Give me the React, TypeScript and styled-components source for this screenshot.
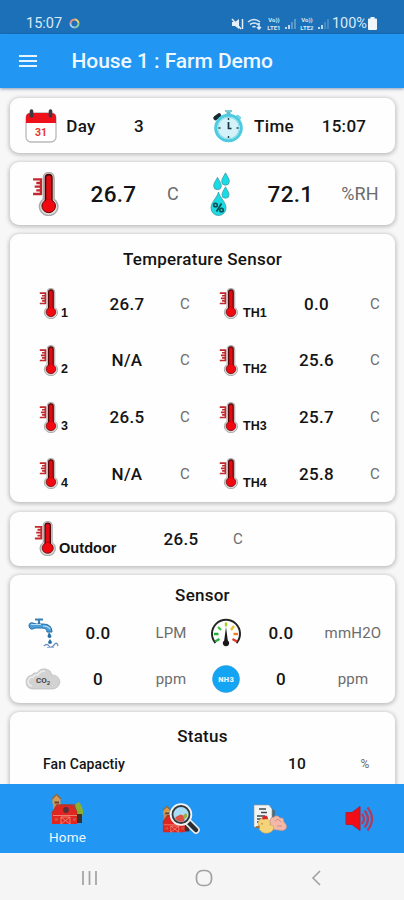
import React from "react";
import styled, { createGlobalStyle } from "styled-components";

const GlobalStyle = createGlobalStyle`
  * { box-sizing: border-box; }
  body { margin: 0; background: #f5f5f5; font-family: Roboto, "Liberation Sans", sans-serif; }
  svg { display: block; flex: none; }
`;

const Screen = styled.div`
  width: 404px;
  height: 900px;
  display: flex;
  flex-direction: column;
  overflow: hidden;
  background: #f7f7f7;
  color: #141414;
`;

const StatusBar = styled.header`
  flex: none;
  height: 34px;
  padding: 13px 27px 0 26px;
  display: flex;
  align-items: center;
  justify-content: space-between;
  background: #1b70b7;
  color: #d9e9f6;
  font-size: 14.5px;
`;

const StatusGroup = styled.div<{ $gap: number }>`
  display: flex;
  align-items: center;
  gap: ${(p) => p.$gap}px;
`;

const Network = styled.span`
  display: grid;
  width: 16px;
  font-size: 6px;
  font-weight: 700;
  line-height: 7.5px;
  text-align: center;
`;

const AppBar = styled.div`
  flex: none;
  height: 54px;
  padding-left: 19px;
  display: flex;
  align-items: center;
  gap: 34.5px;
  background: #2196f3;
  box-shadow: 0 1px 3px rgba(0, 40, 100, 0.45);
  z-index: 1;
`;

const AppTitle = styled.h1`
  margin: 0;
  color: #eef8ff;
  font-size: 21px;
  font-weight: 500;
  letter-spacing: -0.05px;
`;

const Content = styled.main`
  flex: 1;
  min-height: 0;
  overflow: hidden;
  padding: 10px 9px 0 10px;
  display: flex;
  flex-direction: column;
  gap: 9.2px;
`;

const Card = styled.section<{ $height: number }>`
  flex: none;
  height: ${(p) => p.$height}px;
  background: #fefefe;
  border-radius: 9px;
  box-shadow: 0 1px 4px 1px rgba(0, 0, 0, 0.24);
`;

const CardTitle = styled.h2<{ $height: number; $top: number }>`
  margin: 0;
  height: ${(p) => p.$height}px;
  padding-top: ${(p) => p.$top}px;
  line-height: ${(p) => p.$height - p.$top}px;
  text-align: center;
  font-size: 17px;
  font-weight: 500;
  letter-spacing: 0.25px;
`;

const Row = styled.div<{ $columns: string; $start: number; $height: number }>`
  display: grid;
  grid-template-columns: ${(p) => p.$columns};
  align-items: center;
  height: ${(p) => p.$height}px;
  padding-left: ${(p) => p.$start}px;
`;

const IconCell = styled.div`
  display: flex;
  align-items: center;
  justify-content: center;
`;

const ProbeCell = styled.div<{ $gap: number; $size: number }>`
  display: flex;
  align-items: flex-end;
  gap: ${(p) => p.$gap}px;
  font: 700 ${(p) => p.$size}px/1 "Liberation Sans", Arial, sans-serif;
`;

const Value = styled.div<{ $size?: number }>`
  text-align: center;
  white-space: nowrap;
  font-size: ${(p) => p.$size ?? 17}px;
  font-weight: 500;
  letter-spacing: 0.3px;
`;

const Unit = styled.div<{ $size?: number }>`
  text-align: center;
  white-space: nowrap;
  color: #6c6c6c;
  font-size: ${(p) => p.$size ?? 15}px;
  letter-spacing: 0.2px;
`;

const FanLabel = styled.div`
  font-size: 14px;
  font-weight: 500;
  letter-spacing: 0.1px;
`;

const BottomNav = styled.nav`
  flex: none;
  height: 69px;
  display: grid;
  grid-template-columns: 135px 92px 86px 91px;
  background: #2196f3;
  z-index: 1;
`;

const NavItem = styled.button`
  border: 0;
  padding: 0;
  background: none;
  display: flex;
  flex-direction: column;
  align-items: center;
  justify-content: center;
  gap: 4px;
  color: #eef8ff;
  font: 400 13.5px/16px Roboto, sans-serif;
  letter-spacing: 0.2px;
`;

const SystemNav = styled.footer`
  flex: none;
  height: 47px;
  padding: 3px 82px 0 81px;
  display: flex;
  align-items: center;
  justify-content: space-between;
  background: #f5f5f5;
`;

function Thermometer({ width, height }: { width: number; height: number }) {
  return (
    <svg width={width} height={height} viewBox="0 0 26 42" preserveAspectRatio="none">
      <path d="M10.500 26V5.500a5 5 0 0 1 10 0V26a8.600 8.600 0 1 1-10 0z" fill="#dcdcdc" stroke="#a9a9a9" strokeWidth="1.300" />
      <path d="M12.500 29V5.500a3 3 0 0 1 6 0V29" fill="#e30b13" stroke="#4b0707" strokeWidth="1.500" />
      <circle cx="15.500" cy="32.500" r="6.300" fill="#f10810" stroke="#5a0505" strokeWidth=".9" />
      <path d="M13.300 26h4.400v6h-4.400z" fill="#f10810" />
      <path d="M9 7H1M9 10.500H4M9 14H2.500M9 17.500H4M9 21H1M8.300 6v16" stroke="#c0282d" strokeWidth="2.200" fill="none" />
    </svg>
  );
}

function CalendarIcon() {
  return (
    <svg width="32" height="34" viewBox="0 0 32 34">
      <rect x="1" y="4" width="30" height="29" rx="5" fill="#fff" stroke="#b9b9b9" strokeWidth="1.300" />
      <path d="M1 14V8q0-4 5-4h20q5 0 5 4v6z" fill="#ef1119" />
      <path d="M6.500 2v5M25.500 2v5" stroke="#3a3a40" strokeWidth="3.600" strokeLinecap="round" />
      <text x="16" y="27" textAnchor="middle" fontFamily="Roboto, sans-serif" fontSize="10.500" fontWeight="700" fill="#e5352c">31</text>
    </svg>
  );
}

function ClockIcon() {
  return (
    <svg width="32" height="34" viewBox="0 0 32 34">
      <path d="M14.500 1h4v5h-4z" fill="#62bfc9" />
      <path d="M13 2h7" stroke="#79cbd4" strokeWidth="2" />
      <path d="M3.500 9L7 6.500" stroke="#17292e" strokeWidth="4.500" strokeLinecap="round" />
      <path d="M25.500 7.500l2 1.500" stroke="#7fd6e2" strokeWidth="3.500" strokeLinecap="round" />
      <circle cx="16.500" cy="19" r="12.800" fill="#d5f2fa" stroke="#4ccbe0" strokeWidth="3" />
      <circle cx="16.500" cy="19" r="10.700" fill="none" stroke="#8bdcea" />
      <path d="M16.500 9v2M16.500 27v2M6.500 19h2M24.500 19h2" stroke="#26474f" strokeWidth="1.400" />
      <path d="M16.500 13v6.500h3" fill="none" stroke="#17353d" strokeWidth="1.700" />
    </svg>
  );
}

const DROP = "M0-7C2-3 4-1 4 2a4 4 0 0 1-8 0C-4-1-2-3 0-7z";

function HumidityIcon() {
  return (
    <svg width="22" height="44" viewBox="0 0 22 44">
      <g fill="#19dce5" stroke="#46979f" strokeWidth=".8">
        <path d={DROP} transform="translate(15.500 7.500) scale(.95)" />
        <path d={DROP} transform="translate(7.500 12) scale(.95)" />
        <path d={DROP} transform="translate(15.500 21) scale(.88)" />
        <path d="M8.500 20c1.500 6 7.500 10 7.500 16a7.500 7.500 0 0 1-15 0c0-6 6-10 7.500-16z" />
      </g>
      <path d="M11.500 31.500l-5 8" stroke="#0b4d52" strokeWidth="1.700" />
      <circle cx="5.500" cy="33" r="1.800" fill="none" stroke="#0b4d52" strokeWidth="1.600" />
      <circle cx="11.500" cy="38" r="1.800" fill="none" stroke="#0b4d52" strokeWidth="1.600" />
    </svg>
  );
}

function FaucetIcon() {
  return (
    <svg width="32" height="32" viewBox="0 0 32 32">
      <path d="M8 2.500h8M12 3v4" stroke="#397fb5" strokeWidth="2.200" />
      <path d="M2 9q0-4 4-3l3 1h7q9 0 9 8h-5q0-4-5-4H8q-5 3-6-2z" fill="#4c9fd9" stroke="#286ca4" />
      <path d="M4 7.500h10M16 9q5 0 7 3" stroke="#b5def5" fill="none" strokeWidth="1.200" />
      <path d="M22 15l2.500 4a2 2 0 0 1-4 0zM23 22l2 3a2 2 0 0 1-4 0z" fill="#2670aa" />
      <path d="M17 29q3-3 5 0t5-1 4 1" stroke="#6c8fc0" fill="none" strokeWidth="1.300" />
      <path d="M20 30.500h7" stroke="#9ab2d5" />
    </svg>
  );
}

function CloudIcon() {
  return (
    <svg width="36" height="22" viewBox="0 0 36 22">
      <path d="M7 21q-6-1-6-7t6-7q1-3 5-2 3-5 9-4 5 1 6 6 7 0 8 7-1 6-7 7z" fill="#d2d2d2" stroke="#bcbcbc" strokeWidth=".7" />
      <path d="M7 18q-4-1-4-4 1-5 5-5 2-3 5-2 2-4 7-4" stroke="#ededed" strokeWidth="1.500" fill="none" />
      <text x="18" y="15" textAnchor="middle" fontFamily="Roboto, sans-serif" fontWeight="700" fontSize="8" fill="#444">CO<tspan fontSize="6" dy="1.500">2</tspan></text>
    </svg>
  );
}

function GaugeIcon() {
  return (
    <svg width="32" height="30" viewBox="0 0 32 30">
      <path d="M5.500 25A14 14 0 1 1 26.500 25" fill="none" stroke="#252525" strokeWidth="2" />
      <path d="M5 23.500l4.500-2.500M4 16h4.500" stroke="#22ae37" strokeWidth="2.400" />
      <path d="M8 9l3 3" stroke="#43c943" strokeWidth="2.400" />
      <path d="M16 4.500v4" stroke="#a8cd24" strokeWidth="2.400" />
      <path d="M24 8l-3 4" stroke="#f1bc2c" strokeWidth="2.400" />
      <path d="M28 16h-4.500" stroke="#f17b26" strokeWidth="2.400" />
      <path d="M27 23.500L22.500 21" stroke="#df3f2b" strokeWidth="2.400" />
      <path d="M16 9l1.800 13.500a3.200 3.200 0 1 1-3.600 0z" fill="#191919" />
    </svg>
  );
}

function AmmoniaIcon() {
  return (
    <svg width="30" height="30" viewBox="0 0 30 30">
      <circle cx="15" cy="15" r="13.500" fill="#14a4f4" stroke="#3a9bd0" strokeWidth=".6" />
      <text x="15.200" y="18" textAnchor="middle" fontFamily="Roboto, sans-serif" fontWeight="900" fontSize="7.500" letterSpacing=".3" fill="#e6f6ff">NH3</text>
    </svg>
  );
}

function Barn() {
  return (
    <g>
      <path d="M2 11h8v19H2z" fill="#d08b5c" />
      <path d="M1.500 5.500l4-4 4 4V11h-8z" fill="#d69a50" />
      <path d="M1 6l4.500-4.500L10 6" fill="none" stroke="#8a6642" strokeWidth="1.300" />
      <path d="M3.500 8.500h4.500v2H3.500z" fill="#604536" />
      <path d="M24 15q0-5 4-6 4 5 4 10t-3 6-5-6z" fill="#8aaf30" />
      <path d="M26 21h5v9h-5z" fill="#40302a" />
      <path d="M1 20l5-7.500 8-1 8 1 4 7.500v11H1z" fill="#df2620" />
      <path d="M1 20l5-8 17 0 3 8" fill="none" stroke="#a93b2b" strokeWidth="1.400" />
      <circle cx="15" cy="17" r="2.900" fill="#543336" />
      <path d="M2 22.500h24M10 31v-7h9v7M10 24l9 7M19 24l-9 7" fill="none" stroke="#ee8a78" strokeWidth=".9" />
      <path d="M4 25h3v3H4zM22 25h3v3h-3z" fill="#c65440" />
    </g>
  );
}

function HomeIcon() {
  return (
    <svg width="34" height="32" viewBox="0 0 34 32"><Barn /></svg>
  );
}

function InspectIcon() {
  return (
    <svg width="40" height="34" viewBox="0 0 40 34">
      <g transform="translate(1 3) scale(.88)"><Barn /></g>
      <path d="M26 19l9 9" stroke="#e8edf0" strokeWidth="7.500" strokeLinecap="round" />
      <path d="M27 20l8 8" stroke="#282d31" strokeWidth="4.500" strokeLinecap="round" />
      <circle cx="20" cy="12.500" r="9" fill="#bce5fa" stroke="#f0f4f6" strokeWidth="4.500" />
      <circle cx="20" cy="12.500" r="8.500" fill="#a9dcf6" stroke="#34393d" strokeWidth="1.800" />
      <path d="M14.500 17v-2l5-2.500 4 1.500v4.500q-5 3-9-1.500z" fill="#df5144" />
      <path d="M23 17q-2-4 2-6 3 4-2 6z" fill="#96b33b" />
    </svg>
  );
}

function ReportIcon() {
  return (
    <svg width="34" height="32" viewBox="0 0 34 32">
      <path d="M15 2l7 6-1 16h-6z" fill="#516b75" />
      <path d="M1 2h15l3 4v18H1z" fill="#f2f4f3" stroke="#8d989b" strokeWidth=".6" />
      <path d="M6 6h7M8 9.500h6M4 13h8M4 16h7M4 19h5" stroke="#414a50" strokeWidth="1.600" />
      <path d="M17 18q0-4 4-4 3-3 6 1 4-1 4 4 4 3 2 7-3 3-8 1-8 1-8-9z" fill="#f3b9a8" stroke="#bd837c" strokeWidth=".6" />
      <path d="M22 18l3-2 3 3M24 23h5" stroke="#d08e84" fill="none" />
      <path d="M5 20q2-6 8-5 5 2 4 7 5 0 3 5-3 4-9 3-6-2-6-10z" fill="#f4d379" stroke="#c5a05f" strokeWidth=".6" />
      <path d="M9.500 16.500q-1-4 2-3.500 3-2 3.500 3z" fill="#d62927" />
      <path d="M9 20v1.500M7 23l-4 1 4 1" stroke="#ad6625" fill="none" />
    </svg>
  );
}

function SpeakerIcon() {
  return (
    <svg width="30" height="28" viewBox="0 0 30 28">
      <path d="M2 7.500h6l8-6v24l-8-6H2z" fill="#f10c16" stroke="#b01f36" />
      <path d="M18 9q4 5 0 10M20.500 5.500q7 8.500 0 17M23.500 2.500q9 11.500 0 23" stroke="#b23a5b" strokeWidth="2.200" fill="none" />
    </svg>
  );
}

function SignalIcon({ full }: { full?: boolean }) {
  return (
    <svg width="12" height="13" viewBox="0 0 12 13">
      <path d="M2 10v2M5 8v4" stroke="#cde2f2" strokeWidth="1.800" />
      <path d="M8 5v7M11 2v10" stroke={full ? "#609dcc" : "#4b8dc3"} strokeWidth="1.800" />
    </svg>
  );
}

const tempColumns = "43px 90px 26px 21px 52px 91px 26px";
const temperatures = [
  ["1", "26.7", "TH1", "0.0"],
  ["2", "N/A", "TH2", "25.6"],
  ["3", "26.5", "TH3", "25.7"],
  ["4", "N/A", "TH4", "25.8"],
];

function Probe({ name, gap }: { name: string; gap: number }) {
  return (
    <ProbeCell $gap={gap} $size={12.5}>
      <Thermometer width={20} height={31} />
      <span>{name}</span>
    </ProbeCell>
  );
}

export default function App() {
  return (
    <Screen>
      <GlobalStyle />
      <StatusBar>
        <StatusGroup $gap={7}>
          <span>15:07</span>
          <svg width="11" height="11" viewBox="0 0 11 11" fill="none" strokeWidth="2">
            <path d="M1.500 6A4 4 0 0 1 5.500 1.500" stroke="#ef8e86" />
            <path d="M5.500 1.500A4 4 0 0 1 9.500 5.500" stroke="#f3cf65" />
            <path d="M9.500 5.500A4 4 0 0 1 5.500 9.500" stroke="#95cf9b" />
            <path d="M5.500 9.500A4 4 0 0 1 1.500 5.500" stroke="#a9c9fa" />
          </svg>
        </StatusGroup>
        <StatusGroup $gap={2.5}>
          <svg width="14" height="12" viewBox="0 0 14 12">
            <path d="M1 4h3l4-3v10L4 8H1z" fill="#e3f0fa" />
            <path d="M1 1l9 10M11.500 1v10" stroke="#e3f0fa" strokeWidth="1.500" />
          </svg>
          <svg width="16" height="12" viewBox="0 0 16 12" fill="none" stroke="#d9e9f6" strokeWidth="1.600">
            <path d="M1 4q6-5 12 0M3 6.500q4-3 8 0M5.500 9q1.500-1 3 0M12 5v6M10 9l2 2 2-2" />
          </svg>
          <Network><span>Vo))</span><span>LTE1</span></Network>
          <SignalIcon full />
          <Network><span>Vo))</span><span>LTE2</span></Network>
          <SignalIcon />
          <StatusGroup $gap={1}>
            <span>100%</span>
            <svg width="9" height="13" viewBox="0 0 9 13">
              <path d="M2.500 0h4v1.500H8q1 0 1 1V12q0 1-1 1H1q-1 0-1-1V2.500q0-1 1-1h1.500z" fill="#eef6fc" />
            </svg>
          </StatusGroup>
        </StatusGroup>
      </StatusBar>
      <AppBar>
        <svg width="18" height="14" viewBox="0 0 18 14">
          <path d="M0 2h18M0 7h18M0 12h18" stroke="#e6f5ff" strokeWidth="2" />
        </svg>
        <AppTitle>House 1 : Farm Demo</AppTitle>
      </AppBar>
      <Content>
        <Card $height={55}>
          <Row $columns="40px 40px 76px 25px 52px 40px 100px" $start={11} $height={55}>
            <IconCell><CalendarIcon /></IconCell>
            <Value>Day</Value>
            <Value>3</Value>
            <span />
            <IconCell><ClockIcon /></IconCell>
            <Value>Time</Value>
            <Value>15:07</Value>
          </Row>
        </Card>
        <Card $height={63}>
          <Row $columns="40px 95px 24px 16px 40px 99px 40px" $start={16} $height={63}>
            <IconCell><Thermometer width={28} height={44} /></IconCell>
            <Value $size={22.5}>26.7</Value>
            <Unit $size={18}>C</Unit>
            <span />
            <IconCell><HumidityIcon /></IconCell>
            <Value $size={22.5}>72.1</Value>
            <Unit $size={18}>%RH</Unit>
          </Row>
        </Card>
        <Card $height={268}>
          <CardTitle $height={41} $top={9}>Temperature Sensor</CardTitle>
          {temperatures.map(([left, leftValue, right, rightValue]) => (
            <Row key={left} $columns={tempColumns} $start={29} $height={56.7}>
              <Probe name={left} gap={2} />
              <Value>{leftValue}</Value>
              <Unit>C</Unit>
              <span />
              <Probe name={right} gap={4} />
              <Value>{rightValue}</Value>
              <Unit>C</Unit>
            </Row>
          ))}
        </Card>
        <Card $height={54}>
          <Row $columns="102px 90px 24px" $start={24} $height={54}>
            <ProbeCell $gap={2} $size={14.6}>
              <Thermometer width={23} height={35} />
              <span>Outdoor</span>
            </ProbeCell>
            <Value>26.5</Value>
            <Unit>C</Unit>
          </Row>
        </Card>
        <Card $height={128}>
          <CardTitle $height={35} $top={5}>Sensor</CardTitle>
          <Row $columns="40px 70px 76px 34px 76px 68px" $start={13} $height={46}>
            <IconCell><FaucetIcon /></IconCell>
            <Value>0.0</Value>
            <Unit>LPM</Unit>
            <IconCell><GaugeIcon /></IconCell>
            <Value>0.0</Value>
            <Unit>mmH2O</Unit>
          </Row>
          <Row $columns="40px 70px 76px 34px 76px 68px" $start={13} $height={46}>
            <IconCell><CloudIcon /></IconCell>
            <Value>0</Value>
            <Unit>ppm</Unit>
            <IconCell><AmmoniaIcon /></IconCell>
            <Value>0</Value>
            <Unit>ppm</Unit>
          </Row>
        </Card>
        <Card $height={140}>
          <CardTitle $height={40} $top={9}>Status</CardTitle>
          <Row $columns="204px 100px 36px" $start={33} $height={24}>
            <FanLabel>Fan Capactiy</FanLabel>
            <Value $size={15.5}>10</Value>
            <Unit $size={12}>%</Unit>
          </Row>
        </Card>
      </Content>
      <BottomNav>
        <NavItem><HomeIcon /><span>Home</span></NavItem>
        <NavItem><InspectIcon /></NavItem>
        <NavItem><ReportIcon /></NavItem>
        <NavItem><SpeakerIcon /></NavItem>
      </BottomNav>
      <SystemNav>
        <svg width="17" height="16" viewBox="0 0 17 16">
          <path d="M2 1v14M8.500 1v14M15 1v14" stroke="#a1a1a1" strokeWidth="1.700" />
        </svg>
        <svg width="18" height="18" viewBox="0 0 18 18">
          <rect x="1.500" y="1.500" width="15" height="15" rx="6" fill="none" stroke="#a1a1a1" strokeWidth="1.700" />
        </svg>
        <svg width="12" height="18" viewBox="0 0 12 18">
          <path d="M10 2L3 9l7 7" fill="none" stroke="#a1a1a1" strokeWidth="1.600" />
        </svg>
      </SystemNav>
    </Screen>
  );
}
